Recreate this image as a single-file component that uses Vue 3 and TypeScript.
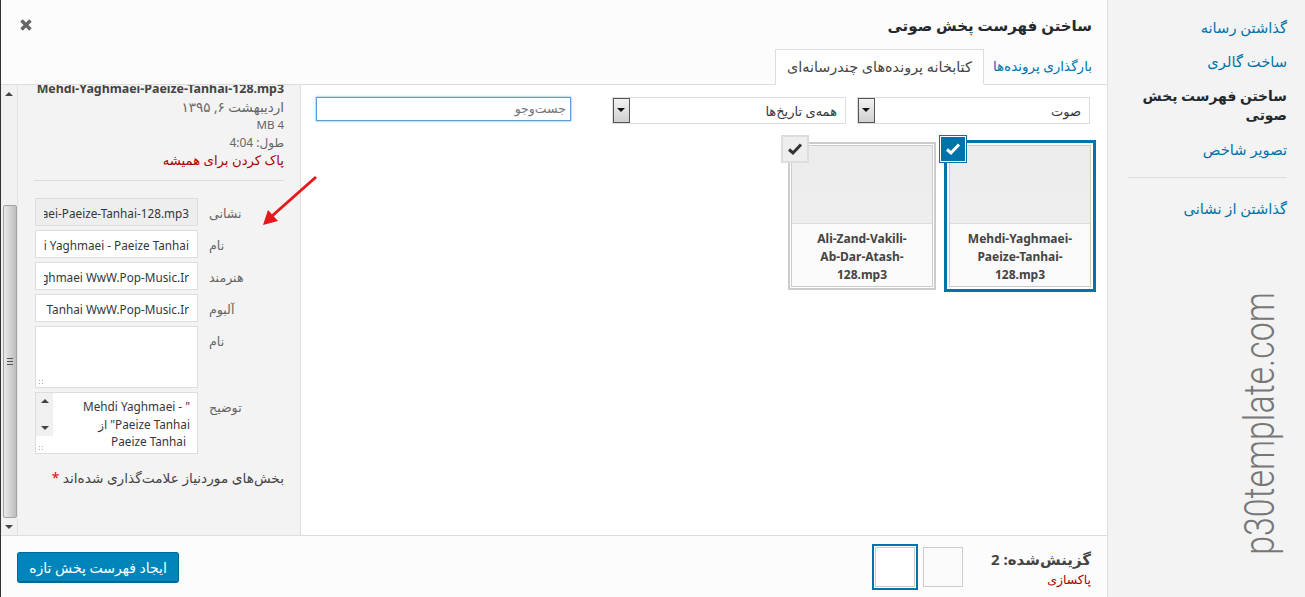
<script setup lang="ts">
interface Field { label: string; value: string; cls?: string }
const fields: Field[] = [
  { label: 'نشانی', value: 'Mehdi-Yaghmaei-Paeize-Tanhai-128.mp3', cls: 'readonly' },
  { label: 'نام', value: 'Mehdi Yaghmaei - Paeize Tanhai' },
  { label: 'هنرمند', value: 'Mehdi Yaghmaei WwW.Pop-Music.Ir' },
  { label: 'آلبوم', value: 'Paeize Tanhai WwW.Pop-Music.Ir' },
]
const cards = [
  { lines: ['Mehdi-Yaghmaei-', 'Paeize-Tanhai-', '128.mp3'], active: true },
  { lines: ['Ali-Zand-Vakili-', 'Ab-Dar-Atash-', '128.mp3'], active: false },
]
</script>

<template>
  <div class="page">
    <div class="modal">
      <header class="head">
        <button class="close" aria-label="close">
          <svg width="14" height="14" viewBox="0 0 14 14"><path d="M2.5 2.5 L11.5 11.5 M11.5 2.5 L2.5 11.5" stroke="#666" stroke-width="3.4" fill="none" /></svg>
        </button>
        <h1 class="title">ساختن فهرست پخش صوتی</h1>
        <nav class="tabs">
          <a class="tab">بارگذاری پرونده‌ها</a>
          <a class="tab active">کتابخانه پرونده‌های چندرسانه‌ای</a>
        </nav>
      </header>

      <div class="body">
        <section class="browser">
          <div class="toolbar">
            <div class="select first"><span>صوت</span><i class="arrow"></i></div>
            <div class="select second"><span>همه‌ی تاریخ‌ها</span><i class="arrow"></i></div>
            <div class="search">جست‌وجو</div>
          </div>
          <div class="grid">
            <article v-for="c in cards" :key="c.lines[0]" class="card" :class="{ on: c.active }">
              <div class="thumb"></div>
              <div class="caption"><div v-for="l in c.lines" :key="l">{{ l }}</div></div>
              <span class="check">
                <svg width="16" height="14" viewBox="0 0 16 14"><path d="M2 7.5 L6 11 L14 2.5" fill="none" stroke="currentColor" stroke-width="3" /></svg>
              </span>
            </article>
          </div>
        </section>

        <aside class="side">
          <div class="scrollbar">
            <div class="sbtn"><i class="up"></i></div>
            <div class="strack">
              <div class="sthumb"><i class="grip"></i></div>
            </div>
            <div class="sbtn"><i class="down"></i></div>
          </div>
          <div class="details">
            <div class="fname">Mehdi-Yaghmaei-Paeize-Tanhai-128.mp3</div>
            <div class="meta date">اردیبهشت ۶, ۱۳۹۵</div>
            <div class="meta small">4 MB</div>
            <div class="meta">طول: 4:04</div>
            <div class="del">پاک کردن برای همیشه</div>
            <hr class="rule" />
            <div v-for="f in fields" :key="f.label + f.value" class="row">
              <div class="box" :class="f.cls"><div class="clip"><span>{{ f.value }}</span></div></div>
              <label class="lbl">{{ f.label }}</label>
            </div>
            <div class="row">
              <div class="box area"><i class="resize"></i></div>
              <label class="lbl">نام</label>
            </div>
            <div class="row">
              <div class="box area desc">
                <div class="mini"><i class="up"></i><i class="down"></i></div>
                <div class="desc-text">
                  <div>" - Mehdi Yaghmaei</div>
                  <div>Paeize Tanhai" از</div>
                  <div class="last">Paeize Tanhai</div>
                </div>
                <i class="resize"></i>
              </div>
              <label class="lbl lower">توضیح</label>
            </div>
            <p class="req">بخش‌های موردنیاز علامت‌گذاری شده‌اند <b>*</b></p>
          </div>
        </aside>
      </div>

      <footer class="foot">
        <button class="primary">ایجاد فهرست پخش تازه</button>
        <div class="chosen">
          <div class="mini-card on"></div>
          <div class="mini-card"></div>
          <div class="count">
            <strong>گزینش‌شده: 2</strong>
            <a>پاکسازی</a>
          </div>
        </div>
      </footer>
    </div>

    <nav class="menu">
      <a class="link">گذاشتن رسانه</a>
      <a class="link">ساخت گالری</a>
      <a class="link cur">ساختن فهرست پخش صوتی</a>
      <a class="link">تصویر شاخص</a>
      <hr class="sep" />
      <a class="link">گذاشتن از نشانی</a>
    </nav>
    <div class="mark">p30template.com</div>
    <svg class="pointer" width="60" height="56" viewBox="0 0 60 56">
      <path d="M56 2 L12 41" stroke="#e5181c" stroke-width="3" fill="none" />
      <path d="M3 50 L8 35 L18 46 Z" fill="#e5181c" />
    </svg>
  </div>
</template>

<style>
html, body { margin: 0; overflow: hidden; }
</style>

<style scoped>
.page {
  position: relative;
  display: flex;
  width: 1305px;
  height: 597px;
  overflow: hidden;
  background: #f3f3f3;
  font-family: "Noto Sans", "DejaVu Sans", sans-serif;
  font-size: 12px;
  color: #444;
}
.pointer { position: absolute; left: 260px; top: 175px; }
.modal {
  width: 1106px;
  height: 597px;
  border-left: 1px solid #333;
  border-right: 1px solid #ddd;
  display: flex;
  flex-direction: column;
  background: #fff;
  flex: none;
}
.head {
  position: relative;
  height: 85px;
  box-sizing: border-box;
  background: #fcfcfc;
  border-bottom: 1px solid #ddd;
  direction: rtl;
  padding: 0 15px 0 0;
}
.close {
  position: absolute;
  left: 18px;
  top: 18px;
  width: 14px;
  height: 14px;
  padding: 0;
  border: 0;
  background: none;
  display: block;
}
.title {
  margin: 0;
  height: 49px;
  line-height: 50px;
  font-size: 15px;
  font-weight: 700;
  color: #23282d;
}
.tabs { display: flex; height: 36px; }
.tab {
  box-sizing: border-box;
  height: 36px;
  line-height: 35px;
  padding: 0 0 0 9px;
  font-size: 13.5px;
  color: #0073aa;
}
.tab.active {
  border: 1px solid #ddd;
  border-bottom-color: #fff;
  background: #fff;
  color: #444;
  width: 209px;
  padding: 0;
  text-align: center;
  line-height: 33px;
  font-size: 14.4px;
}
.body { flex: 1; display: flex; min-height: 0; flex-direction: row-reverse; }
.side {
  width: 299px;
  flex: none;
  display: flex;
  background: #f3f3f3;
  border-right: 1px solid #ddd;
  overflow: hidden;
}
.scrollbar {
  width: 17px;
  flex: none;
  display: flex;
  flex-direction: column;
  background: #f1f1f1;
  border-right: 1px solid #e4e4e4;
  box-sizing: border-box;
}
.sbtn { height: 17px; display: flex; align-items: center; justify-content: center; flex: none; }
.strack { flex: 1; display: flex; flex-direction: column; justify-content: flex-end; }
.sthumb {
  height: 313px;
  box-sizing: border-box;
  margin-left: 2px;
  border: 1px solid #a3a3a3;
  border-radius: 2px;
  background: linear-gradient(90deg, #e9e9e9, #cfcfcf 60%, #bdbdbd);
  display: flex;
  align-items: center;
  justify-content: center;
}
.grip { width: 6px; height: 7px; background: repeating-linear-gradient(180deg, #555 0 1px, transparent 1px 3px); }
.up, .down { display: block; width: 0; height: 0; border-left: 4px solid transparent; border-right: 4px solid transparent; }
.up { border-bottom: 4px solid #444; }
.down { border-top: 4px solid #444; }
.details { flex: 1; direction: rtl; padding: 0 16px; box-sizing: border-box; min-width: 0; }
.fname { margin-top: -5px; line-height: 18px; font-weight: 700; font-size: 12.4px; color: #444; direction: ltr; text-align: right; white-space: nowrap; }
.meta { line-height: 18px; color: #666; font-size: 12px; }
.meta.date { font-size: 13.5px; }
.meta.small { font-size: 11.5px; }
.del { line-height: 17px; color: #a00; font-size: 13.2px; }
.rule { border: 0; border-top: 1px solid #ddd; margin: 11px 0 17px; }
.row { display: flex; direction: ltr; margin-bottom: 4px; padding-left: 1px; }
.box {
  width: 163px;
  height: 28px;
  box-sizing: border-box;
  border: 1px solid #ddd;
  background: #fff;
  padding: 0 8px;
  flex: none;
  position: relative;
}
.box.readonly { background: #eee; }
.clip { display: flex; justify-content: flex-end; overflow: hidden; white-space: nowrap; line-height: 28px; color: #32373c; font-size: 11.75px; }
.clip span { flex: none; }
.lbl { margin-left: 11px; padding-top: 8px; line-height: 16px; color: #666; font-size: 12.6px; }
.area { height: 62px; padding: 0; }
.row:has(.desc) .lbl { padding-top: 8px; }
.resize {
  position: absolute;
  left: 2px;
  bottom: 1px;
  width: 7px;
  height: 7px;
  background: radial-gradient(circle, #aaa 0.6px, transparent 0.8px) 0 0 / 3px 3px;
}
.desc { display: flex; }
.mini {
  width: 17px;
  flex: none;
  height: 43px;
  background: #f0f0f0;
  display: flex;
  flex-direction: column;
  align-items: center;
  justify-content: space-between;
  padding: 6px 0;
  box-sizing: border-box;
}
.desc-text { flex: 1; direction: rtl; padding: 5px 7px 0 0; line-height: 17.5px; color: #32373c; font-size: 11.75px; }
.desc-text .last { padding-right: 4px; }
.req { margin: 15px 0 0; line-height: 18px; color: #444; font-size: 13.7px; }
.req b { color: #e00; font-weight: 400; }
.browser { flex: 1; min-width: 0; background: #fff; direction: rtl; position: relative; }
.toolbar { display: flex; padding: 12px 17px 0 0; align-items: flex-start; }
.select {
  box-sizing: border-box;
  height: 27px;
  border: 1px solid #ddd;
  display: flex;
  align-items: center;
  justify-content: space-between;
  color: #32373c;
  font-size: 13px;
  padding-right: 8px;
}
.select.first { width: 233px; margin-left: 11px; }
.select.second { width: 234px; margin-left: 41px; }
.arrow {
  display: block;
  width: 17px;
  height: 25px;
  box-sizing: border-box;
  border: 1px solid #555;
  background: linear-gradient(180deg, #f2f2f2, #cfcfcf) ;
  position: relative;
}
.arrow::after {
  content: "";
  position: absolute;
  left: 3px;
  top: 9px;
  border-left: 4px solid transparent;
  border-right: 4px solid transparent;
  border-top: 4px solid #111;
}
.search {
  box-sizing: border-box;
  width: 255px;
  height: 24px;
  line-height: 22px;
  border: 1px solid #5b9dd9;
  box-shadow: 0 0 2px rgba(30, 140, 190, .8);
  padding-right: 4px;
  color: #72777c;
  font-size: 12.5px;
  background: #fff;
}
.grid { display: flex; padding: 21px 16px 0 0; gap: 16px; }
.card {
  position: relative;
  width: 142px;
  height: 142px;
  box-sizing: border-box;
  border: 1px solid #ccc;
  box-shadow: 0 0 0 1px #fff, 0 0 0 3px #ccc;
  display: flex;
  flex-direction: column;
  direction: ltr;
}
.card.on { box-shadow: 0 0 0 2px #fff, 0 0 0 5px #0073aa; }
.thumb { height: 77px; flex: none; background: linear-gradient(180deg, #ececec, #eee); border-bottom: 1px solid #ddd; }
.caption { flex: 1; background: #fafafa; text-align: center; font-weight: 700; font-size: 12px; line-height: 18px; color: #444; padding-top: 6px; }
.check {
  position: absolute;
  top: -10px;
  left: -10px;
  width: 24px;
  height: 24px;
  border: 1px solid #ddd;
  box-shadow: 0 0 0 1px #ddd;
  background: #eee;
  color: #333;
  display: flex;
  align-items: center;
  justify-content: center;
}
.card.on .check { background: #0073aa; color: #fff; border-color: #fff; box-shadow: 0 0 0 1px #0073aa; }
.foot {
  height: 62px;
  box-sizing: border-box;
  flex: none;
  background: #fcfcfc;
  border-top: 1px solid #ddd;
  display: flex;
  justify-content: space-between;
  padding: 0 16px 0 16px;
}
.primary {
  margin-top: 16px;
  width: 162px;
  height: 31px;
  padding: 0;
  border: 1px solid #006799;
  border-bottom-width: 2px;
  border-radius: 3px;
  background: #0085ba;
  color: #fff;
  font-family: inherit;
  font-size: 14px;
  direction: rtl;
}
.chosen { display: flex; align-items: flex-start; }
.mini-card {
  width: 40px;
  height: 40px;
  box-sizing: border-box;
  border: 1px solid #ccc;
  margin: 11px 0 0 5px;
  background: #fafafa;
  flex: none;
}
.mini-card.on { width: 46px; height: 46px; margin: 8px 0 0; border: 2px solid #0073aa; box-shadow: inset 0 0 0 1px #fff, inset 0 0 0 2px #ccc; background: #fff; }
.count { width: 128px; direction: rtl; display: flex; flex-direction: column; padding-top: 13px; }
.count strong { line-height: 20px; font-size: 15px; color: #444; }
.count a { color: #a00; font-size: 12.4px; line-height: 20px; margin-top: 1px; }
.menu {
  flex: 1;
  direction: rtl;
  padding: 16px 18px 0 20px;
  display: flex;
  flex-direction: column;
}
.link { display: block; color: #0073aa; font-size: 14.7px; line-height: 18px; padding: 2px 0; margin-bottom: 12px; }
.link.cur { color: #23282d; font-weight: 700; font-size: 13.9px; line-height: 19px; }
.sep { width: 100%; border: 0; border-top: 1px solid #ddd; margin: 5px 0 19px; }
.mark {
  position: absolute;
  left: 1238px;
  top: 257px;
  writing-mode: vertical-rl;
  transform: rotate(180deg) scaleY(.788);
  font-family: Roboto, sans-serif;
  font-weight: 300;
  font-size: 43px;
  line-height: 42px;
  color: #777;
}
</style>
